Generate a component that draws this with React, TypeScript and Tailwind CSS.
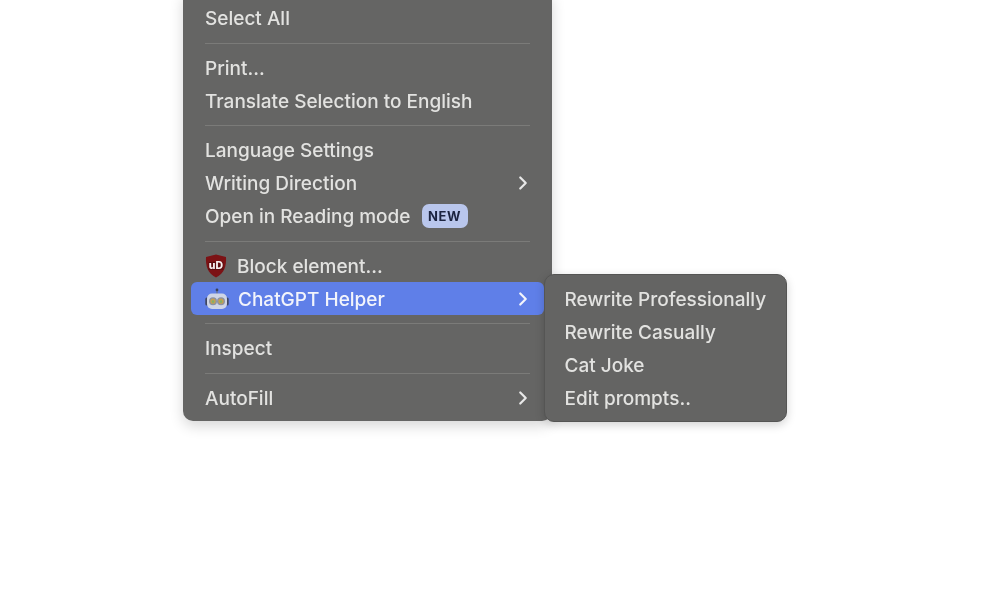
import { ChevronRight } from 'lucide-react'

function UBlockIcon() {
  return (
    <svg width="22" height="24" viewBox="0 0 22 24" className="shrink-0">
      <path d="M11 0.5 L21 3 C21.5 12 19.5 19 11 23.5 C2.5 19 0.5 12 1 3 Z" fill="#7c1215" />
      <path d="M3.5 8 L18.5 8 L18.5 16 L3.5 16 Z" fill="#5e0d10" />
      <text x="11" y="15" textAnchor="middle" fontSize="10.5" fontWeight="800" fill="#f7f0f0" fontFamily="Inter, sans-serif">
        uD
      </text>
    </svg>
  )
}

function RobotIcon() {
  return (
    <svg width="24" height="24" viewBox="0 0 24 24" className="shrink-0">
      <circle cx="12" cy="3" r="1.4" fill="#3c4258" />
      <path d="M12 4v3" stroke="#6a7188" strokeWidth="1.2" />
      <rect x="0.3" y="10.5" width="3.5" height="8" rx="1.6" fill="#3f4660" />
      <rect x="20.2" y="10.5" width="3.5" height="8" rx="1.6" fill="#3f4660" />
      <rect x="2" y="6.5" width="20" height="15.5" rx="5" fill="#cfd5e6" />
      <circle cx="8" cy="14.2" r="4" fill="#8b92a6" />
      <circle cx="16" cy="14.2" r="4" fill="#8b92a6" />
      <circle cx="8" cy="14.2" r="2.6" fill="#c9a04e" />
      <circle cx="16" cy="14.2" r="2.6" fill="#c9a04e" />
      <circle cx="8" cy="14.6" r="1.3" fill="#7fb06c" />
      <circle cx="16" cy="14.6" r="1.3" fill="#7fb06c" />
    </svg>
  )
}

function Sep() {
  return (
    <div className="flex h-[16.5px] items-center px-[22px]">
      <div className="h-px w-full bg-[#7b7b79]" />
    </div>
  )
}

function Row({ label, arrow, children }: { label: string; arrow?: boolean; children?: React.ReactNode }) {
  return (
    <div className="flex h-[33px] items-center pl-[22px] pr-[18px]">
      <span className="whitespace-nowrap pt-[2px]">{label}</span>
      {children}
      {arrow && <ChevronRight className="ml-auto h-[22px] w-[22px] text-[#e8e8e8]" strokeWidth={2.4} />}
    </div>
  )
}

export default function App() {
  return (
    <div className="relative h-[600px] w-[1000px] overflow-hidden bg-white font-['Inter',sans-serif] text-[19px] font-[450] text-[#e2e2e0] blur-[0.5px]">
      <div className="ml-[183px] mt-[-10px] w-[369px] rounded-[10px] bg-[#656564] pb-[6.4px] pt-[11.9px] shadow-[0_5px_14px_rgba(0,0,0,0.16)]">
        <Row label="Select All" />
        <Sep />
        <Row label="Print..." />
        <Row label="Translate Selection to English" />
        <Sep />
        <Row label="Language Settings" />
        <Row label="Writing Direction" arrow />
        <Row label="Open in Reading mode">
          <span className="ml-[11px] flex h-[24px] w-[46px] items-center justify-center rounded-[7px] bg-[#b9c6ec] text-[13px] font-bold tracking-[0.6px] text-[#1c2440]">
            NEW
          </span>
        </Row>
        <Sep />
        <div className="flex h-[33px] items-center gap-[10px] pl-[22px]">
          <UBlockIcon />
          <span className="pt-[2px]">Block element...</span>
        </div>
        <div className="mx-[8px] flex h-[33px] items-center gap-[9px] rounded-[6px] bg-[#5f7fe8] pl-[14px] pr-[10px] text-[#f2f4fb]">
          <RobotIcon />
          <span className="pt-[2px]">ChatGPT Helper</span>
          <ChevronRight className="ml-auto h-[22px] w-[22px]" strokeWidth={2.4} />
        </div>
        <Sep />
        <Row label="Inspect" />
        <Sep />
        <Row label="AutoFill" arrow />
      </div>

      <div className="absolute left-[544px] top-[274px] w-[243px] rounded-[10px] border border-[#555554] bg-[#646463] pb-[6px] pl-[19.5px] pt-[8px] shadow-[0_3px_10px_rgba(0,0,0,0.18)]">
        <div className="flex h-[33px] items-center whitespace-nowrap pt-[2px]">Rewrite Professionally</div>
        <div className="flex h-[33px] items-center whitespace-nowrap pt-[2px]">Rewrite Casually</div>
        <div className="flex h-[33px] items-center whitespace-nowrap pt-[2px]">Cat Joke</div>
        <div className="flex h-[33px] items-center whitespace-nowrap pt-[2px]">Edit prompts..</div>
      </div>
    </div>
  )
}
